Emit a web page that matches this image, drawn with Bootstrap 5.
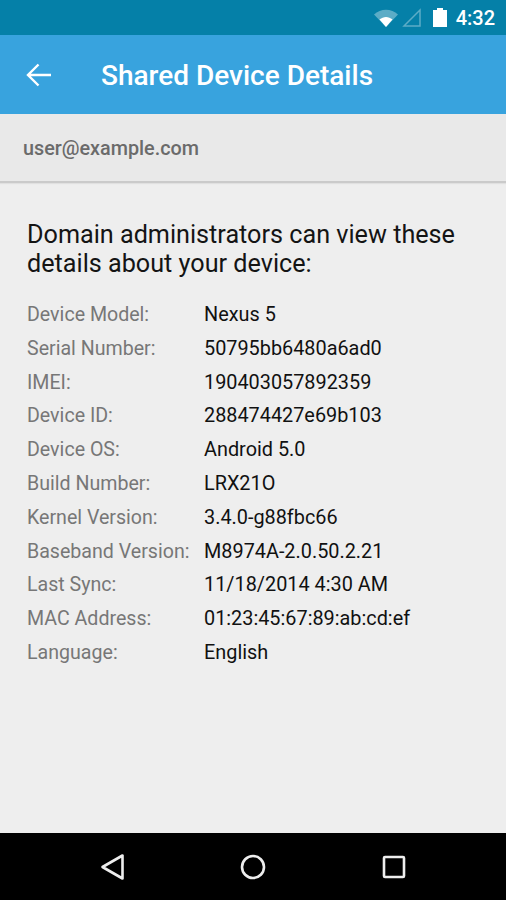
<!DOCTYPE html>
<html lang="en">
<head>
<meta charset="utf-8">
<title>Shared Device Details</title>
<link href="https://cdn.jsdelivr.net/npm/bootstrap@5.3.0/dist/css/bootstrap.min.css" rel="stylesheet">
<style>
html,body{height:100%;margin:0}
body{font-family:Roboto,"Liberation Sans",sans-serif;background:#eee;width:506px;height:900px;overflow:hidden}
.phone{height:900px}
.stat-bar{height:35px;background:#0580a8;color:#fff;font-size:20px;font-weight:500;padding-right:11px}
.app-bar{height:79px;background:#38a3de;color:#fff;padding-top:2px}
.back-btn{width:101px;padding-left:26px;margin-bottom:2px}
.app-title{font-size:28px;font-weight:500;line-height:1}
.acct{height:69px;background:#e9e9e9;border-bottom:2px solid #cacaca;box-shadow:0 1px 1px rgba(0,0,0,.06);color:#6b6b6b;font-size:19.8px;font-weight:500;padding:2px 0 0 23px}
.body-area{padding:37px 27px 0;color:#111}
.lede{font-size:25.200px;line-height:29px;margin:0 0 20px;color:#141414}
.info-row{height:33.8px;font-size:19.85px;line-height:33.8px;margin:0}
.info-key{width:177px;color:#777;flex:none;font-size:19.6px}
.info-val{color:#111}
.nav-strip{height:67px;background:#000}
.nav-slot{width:140px}
.shift-r{margin-left:1px}
.ico-wifi{margin-right:4px}
.ico-sig{margin-right:12px}
.ico-bat{margin-right:9px}
</style>
</head>
<body>
<div class="phone d-flex flex-column">
  <div class="stat-bar d-flex align-items-center justify-content-end flex-shrink-0">
    <svg width="24" height="18" viewBox="0 0 24 18" class="ico-wifi"><path d="M0 5.500C6.500 -0.800 17.500 -0.800 24 5.500L12 18Z" fill="#fff" fill-opacity=".35"/><path d="M5.500 10.500C9.500 7 14.500 7 18.500 10.500L12 18Z" fill="#fff"/></svg>
    <svg width="19" height="19" viewBox="0 0 19 19" class="ico-sig"><path d="M18 2V18H2Z" fill="none" stroke="#fff" stroke-opacity=".35" stroke-width="1.500"/></svg>
    <svg width="14" height="19" viewBox="0 0 14 19" class="ico-bat"><path d="M4 0H10V2H14V19H0V2H4Z" fill="#fff"/></svg>
    <span>4:32</span>
  </div>
  <div class="app-bar d-flex align-items-center flex-shrink-0">
    <div class="back-btn">
      <svg width="26" height="24" viewBox="0 0 26 24" class="d-block"><path d="M2 12H25M12.500 1.500L2 12L12.500 22.500" fill="none" stroke="#fff" stroke-width="2.400"/></svg>
    </div>
    <div class="app-title">Shared Device Details</div>
  </div>
  <div class="acct d-flex align-items-center flex-shrink-0">user@example.com</div>
  <div class="body-area flex-grow-1">
    <p class="lede">Domain administrators can view these details about your device:</p>
    <div class="d-flex info-row"><div class="info-key">Device Model:</div><div class="info-val">Nexus 5</div></div>
    <div class="d-flex info-row"><div class="info-key">Serial Number:</div><div class="info-val">50795bb6480a6ad0</div></div>
    <div class="d-flex info-row"><div class="info-key">IMEI:</div><div class="info-val">190403057892359</div></div>
    <div class="d-flex info-row"><div class="info-key">Device ID:</div><div class="info-val">288474427e69b103</div></div>
    <div class="d-flex info-row"><div class="info-key">Device OS:</div><div class="info-val">Android 5.0</div></div>
    <div class="d-flex info-row"><div class="info-key">Build Number:</div><div class="info-val">LRX21O</div></div>
    <div class="d-flex info-row"><div class="info-key">Kernel Version:</div><div class="info-val">3.4.0-g88fbc66</div></div>
    <div class="d-flex info-row"><div class="info-key">Baseband Version:</div><div class="info-val">M8974A-2.0.50.2.21</div></div>
    <div class="d-flex info-row"><div class="info-key">Last Sync:</div><div class="info-val">11/18/2014 4:30 AM</div></div>
    <div class="d-flex info-row"><div class="info-key">MAC Address:</div><div class="info-val">01:23:45:67:89:ab:cd:ef</div></div>
    <div class="d-flex info-row"><div class="info-key">Language:</div><div class="info-val">English</div></div>
  </div>
  <div class="nav-strip d-flex align-items-center justify-content-center flex-shrink-0">
    <div class="nav-slot d-flex justify-content-center">
      <svg width="26" height="28" viewBox="0 0 26 28"><path d="M22.500 2.500V25.500L2.500 14Z" fill="none" stroke="#eee" stroke-width="2.600" stroke-linejoin="round"/></svg>
    </div>
    <div class="nav-slot d-flex justify-content-center">
      <svg width="26" height="26" viewBox="0 0 26 26"><circle cx="13" cy="13" r="11" fill="none" stroke="#eee" stroke-width="2.600"/></svg>
    </div>
    <div class="nav-slot d-flex justify-content-center shift-r">
      <svg width="24" height="24" viewBox="0 0 24 24"><rect x="2" y="2" width="20" height="20" rx="1" fill="none" stroke="#eee" stroke-width="2.600"/></svg>
    </div>
  </div>
</div>
<script src="https://cdn.jsdelivr.net/npm/bootstrap@5.3.0/dist/js/bootstrap.bundle.min.js"></script>
</body>
</html>
